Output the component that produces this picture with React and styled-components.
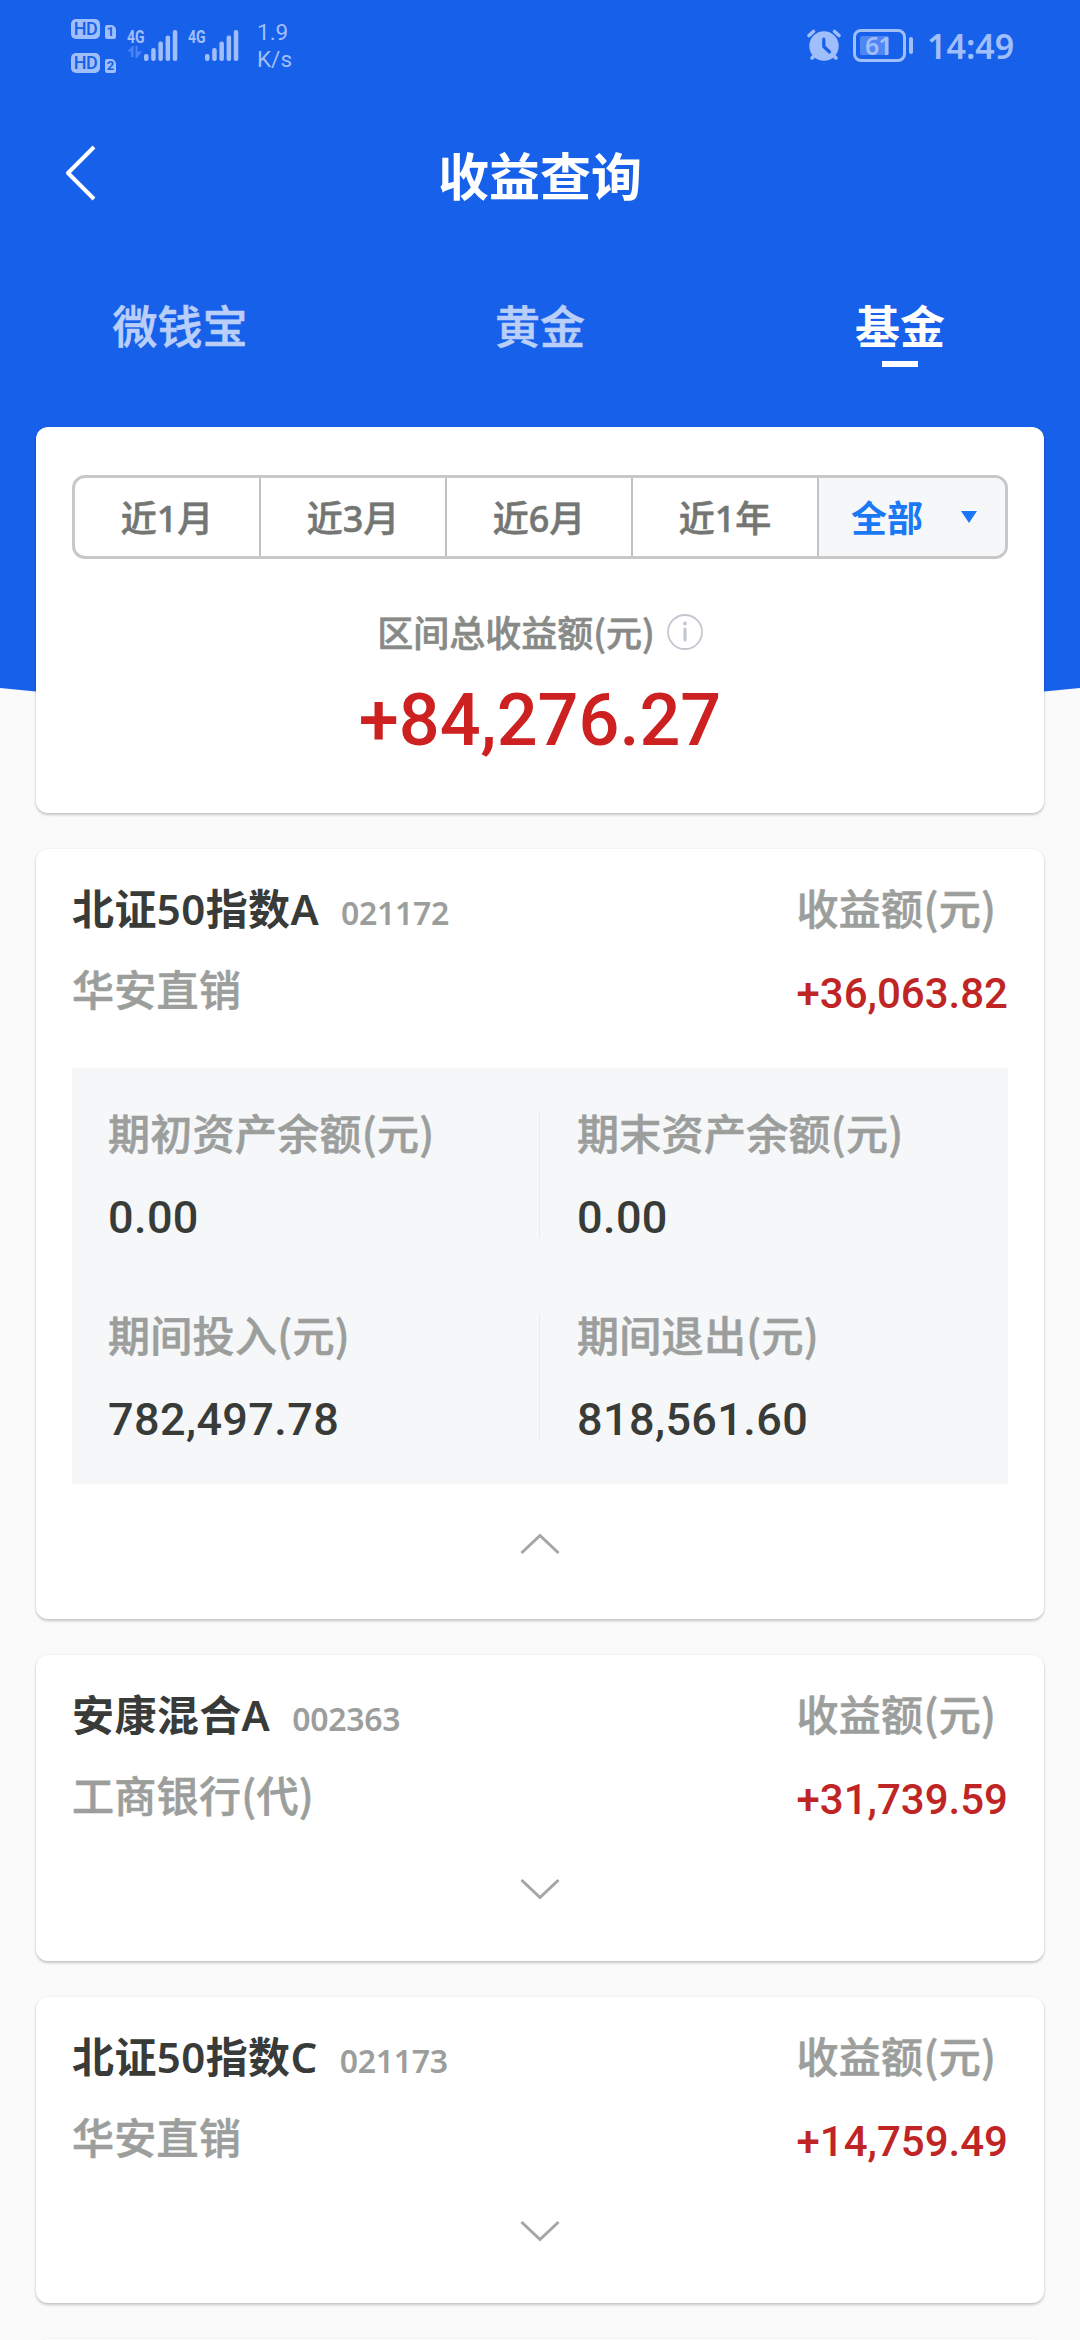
import React, { useState } from "react";
import styled, { createGlobalStyle, css } from "styled-components";

const SANS = '"Noto Sans", "Noto Sans CJK SC", sans-serif';
const CJK = '"Noto Sans CJK SC", "Noto Sans", sans-serif';
const NUM = 'Roboto, "Noto Sans CJK SC", sans-serif';
const STATUS = "#a0bef9";
const BLUE = "#1760ea";

const GlobalStyle = createGlobalStyle`
  * { box-sizing: border-box; }
  body {
    margin: 0;
    background: #fafafa;
    font-family: ${SANS};
    overflow: hidden;
  }
  button {
    font: inherit;
    color: inherit;
    border: 0;
    padding: 0;
    margin: 0;
    background: none;
  }
`;

/* Thickens regular CJK glyphs to a medium weight. */
const medium = css`
  font-weight: 500;
  -webkit-text-stroke: 0.6px currentColor;
`;

const Screen = styled.div`
  width: 1080px;
  height: 2340px;
  overflow: hidden;
  background: #fafafa;
`;

const Header = styled.header`
  height: 712px;
  margin-bottom: -285px;
  background: ${BLUE};
  clip-path: polygon(0 0, 100% 0, 100% 688px, 1044px 691.5px, 800px 707px, 540px 712px, 280px 707px, 36px 691.5px, 0 688px);
`;

const StatusBar = styled.div`
  display: flex;
  justify-content: space-between;
  height: 92px;
  padding: 0 66px 0 71px;
  color: ${STATUS};
`;

const StatusGroup = styled.div`
  display: flex;
  align-items: flex-start;
`;

const SimColumn = styled.div`
  display: flex;
  flex-direction: column;
  gap: 14px;
  padding-top: 18.5px;
  width: 56px;
`;

const SimLine = styled.div`
  display: flex;
  align-items: flex-end;
  gap: 5px;
  height: 20px;
`;

const HdBadge = styled.span`
  width: 29px;
  height: 20px;
  border-radius: 5px;
  background: ${STATUS};
  color: ${BLUE};
  font: 500 18px/20px ${NUM};
  letter-spacing: -0.5px;
  text-align: center;
`;

const SimTag = styled.span`
  width: 11px;
  height: 14px;
  border-radius: 2px 5px 2px 2px;
  background: ${STATUS};
  color: ${BLUE};
  font: 700 13px/14px ${NUM};
  text-align: center;
`;

const Signal = styled.div`
  display: flex;
  align-items: flex-end;
  height: 61px;
  width: 61px;
`;

const Network = styled.div`
  display: flex;
  flex-direction: column;
  width: 16.5px;
  height: 33px;
  white-space: nowrap;
`;

const NetworkLabel = styled.span`
  font: 700 19px/18px ${NUM};
  transform: scaleX(0.74);
  transform-origin: 0 50%;
`;

const Speed = styled.div`
  padding: 18.5px 0 0 8px;
  font: 400 22.5px/27.5px ${NUM};
`;

const AlarmSvg = styled.svg`
  margin: 28px 11px 0 0;
`;

const Battery = styled.div`
  width: 53px;
  height: 33px;
  margin-top: 29px;
  padding: 4px;
  border: 3px solid ${STATUS};
  border-radius: 8px;
  display: flex;
`;

const BatteryLevel = styled.div`
  width: 29px;
  height: 19px;
  border-radius: 2px;
  background: #4f86f3;
  display: flex;
  align-items: center;
`;

const BatteryText = styled.span`
  margin-left: 5px;
  font: 600 25px/19px ${SANS};
  letter-spacing: -1px;
`;

const BatteryTip = styled.div`
  width: 4px;
  height: 17px;
  margin: 37px 14px 0 3px;
  border-radius: 2px;
  background: ${STATUS};
`;

const Clock = styled.div`
  font: 600 34px/40px ${SANS};
  padding-top: 26px;
  width: 87px;
  white-space: nowrap;
`;

const NavBar = styled.div`
  display: grid;
  grid-template-columns: 160px 1fr 160px;
  align-items: center;
  height: 166px;
`;

const BackButton = styled.button`
  display: flex;
  padding: 0 0 4px 64px;
`;

const Title = styled.h1`
  margin: 0;
  color: #fff;
  font: 700 51px/60px ${SANS};
  text-align: center;
  padding-top: 2px;
`;

const Tabs = styled.nav`
  display: grid;
  grid-template-columns: repeat(3, 1fr);
  padding-top: 39px;
`;

const Tab = styled.button`
  display: flex;
  flex-direction: column;
  align-items: center;
  gap: 4px;
  font-size: 45px;
  line-height: 60px;
  ${medium}
  color: #b9cffa;

  ${({ $active }) =>
    $active &&
    css`
      font-weight: 700;
      -webkit-text-stroke: 0;
      color: #fff;
      &::after {
        content: "";
        width: 36px;
        height: 6px;
        background: #fff;
      }
    `}
`;

const Content = styled.main`
  position: relative;
  display: flex;
  flex-direction: column;
  gap: 36px;
  padding: 0 36px;
`;

const Card = styled.section`
  flex: none;
  display: flex;
  flex-direction: column;
  background: #fff;
  border-radius: 12px;
  padding: 0 36px;
  box-shadow: 0 2px 3px rgba(0, 0, 0, 0.2), 0 0 2px rgba(0, 0, 0, 0.08);
`;

const SummaryCard = styled(Card)`
  height: 386px;
  padding-top: 48px;
  align-items: center;
`;

const Segments = styled.div`
  display: grid;
  grid-template-columns: repeat(5, 1fr);
  width: 100%;
  height: 84px;
  border: 3px solid #c8c8c8;
  border-radius: 13px;
  overflow: hidden;
`;

const Segment = styled.button`
  display: flex;
  align-items: center;
  justify-content: center;
  gap: 38px;
  padding-top: 4px;
  font-size: 36px;
  line-height: 50px;
  ${medium}
  color: #747674;
  border-right: 2px solid #c2c2c2;

  &:last-child {
    border-right: 0;
  }

  ${({ $active }) =>
    $active &&
    css`
      padding-left: 4px;
      background: #f5f7f9;
      color: #1a78f5;
      font-weight: 700;
      -webkit-text-stroke: 0;
    `}
`;

const DropMark = styled.span`
  width: 16px;
  height: 12px;
  margin-bottom: 4px;
  background: #1a78f5;
  clip-path: polygon(0 0, 100% 0, 50% 100%);
`;

const SummaryLabel = styled.div`
  display: flex;
  align-items: center;
  gap: 12px;
  margin-top: 44px;
  font-family: ${CJK};
  font-size: 36px;
  line-height: 56px;
  ${medium}
  color: #888a88;
`;

const InfoSvg = styled.svg`
  margin-top: 1px;
`;

const Total = styled.div`
  margin-top: 17px;
  font: 500 72px/90px ${NUM};
  color: #cc2120;
`;

const FundCard = styled(Card)`
  height: ${({ $open }) => ($open ? 770 : 306)}px;
`;

const FundHead = styled.div`
  display: flex;
  justify-content: space-between;
  padding-top: 30px;
  height: 219px;
  flex: none;
`;

const FundColumn = styled.div`
  display: flex;
  flex-direction: column;
  gap: 21px;
`;

const FundTitle = styled.div`
  display: flex;
  align-items: baseline;
  gap: 22px;
  height: 60px;
`;

const FundName = styled.span`
  font-size: 42px;
  line-height: 60px;
  letter-spacing: 0.4px;
  font-weight: 600;
  color: #383b38;
`;

const FundCode = styled.span`
  font-size: 32px;
  line-height: 60px;
  font-weight: 600;
  letter-spacing: -0.3px;
  color: #9c9e9c;
`;

const Muted = styled.div`
  font-family: ${CJK};
  font-size: 42px;
  line-height: 56px;
  height: 60px;
  letter-spacing: 0.3px;
  ${medium}
  color: #9c9e9c;
`;

const Profit = styled.div`
  padding-top: 4px;
  font: 500 42px/60px ${NUM};
  color: #c02525;
`;

const Details = styled.div`
  display: grid;
  grid-template-columns: 1fr 1fr;
  row-gap: 76px;
  height: 416px;
  padding: 44px 0;
  background: #f5f7f9;
  flex: none;
`;

const Detail = styled.div`
  height: 126px;
  padding-left: ${({ $divider }) => ($divider ? 36 : 37)}px;
  border-right: ${({ $divider }) => ($divider ? "1px solid #e9ebed" : "0")};
`;

const DetailLabel = styled(Muted)`
  margin-top: -8px;
`;

const DetailValue = styled.div`
  margin-top: 24px;
  font: 500 45px/60px ${NUM};
  letter-spacing: 0.4px;
  color: #383b38;
`;

const Toggle = styled.button`
  display: flex;
  justify-content: center;
  padding-top: ${({ $open }) => ($open ? 48 : 3)}px;
`;

const Arrows = () => (
  <svg width="15" height="13" viewBox="0 0 15 13" fill="#4a83f2">
    <path d="M0 6 L5.500 0 H6.500 V11 H4 V5.500 H0 Z" />
    <path d="M8.500 0 H10.500 V5.500 H15 L10 12 H8.500 Z" />
  </svg>
);

const Bars = () => (
  <svg width="34" height="31" viewBox="0 0 34 31" fill={STATUS}>
    {[7, 13, 19.5, 25.5, 31].map((h, i) => (
      <rect key={h} x={i * 7.2} y={31 - h} width="4.500" height={h} rx="2" />
    ))}
  </svg>
);

const Alarm = () => (
  <AlarmSvg width="36" height="34" viewBox="0 0 36 34" fill="none" strokeLinecap="round">
    <circle cx="18" cy="18" r="14.700" fill={STATUS} />
    <path d="M3 7.500 L7.500 3.500 M33 7.500 L28.500 3.500" stroke={STATUS} strokeWidth="3.600" />
    <path d="M8 28 L6 30 M28 28 L30 30" stroke={STATUS} strokeWidth="3.600" />
    <path d="M17.800 11 V18.500 L23.500 24" stroke={BLUE} strokeWidth="3.200" strokeLinejoin="round" />
  </AlarmSvg>
);

const Chevron = ({ up }) => (
  <svg width="40" height="24" viewBox="0 0 40 24" fill="none" stroke="#a5a5a5" strokeWidth="3">
    <path d={up ? "M1.500 21 L20 3.500 L38.500 21" : "M1.500 3 L20 20.500 L38.500 3"} />
  </svg>
);

const FUNDS = [
  {
    name: "北证50指数A",
    code: "021172",
    channel: "华安直销",
    profit: "+36,063.82",
    details: [
      ["期初资产余额(元)", "0.00"],
      ["期末资产余额(元)", "0.00"],
      ["期间投入(元)", "782,497.78"],
      ["期间退出(元)", "818,561.60"],
    ],
  },
  { name: "安康混合A", code: "002363", channel: "工商银行(代)", profit: "+31,739.59" },
  { name: "北证50指数C", code: "021173", channel: "华安直销", profit: "+14,759.49" },
];

function Fund({ fund }) {
  const [open, setOpen] = useState(Boolean(fund.details));
  const expanded = open && fund.details;
  return (
    <FundCard $open={expanded}>
      <FundHead>
        <FundColumn>
          <FundTitle>
            <FundName>{fund.name}</FundName>
            <FundCode>{fund.code}</FundCode>
          </FundTitle>
          <Muted>{fund.channel}</Muted>
        </FundColumn>
        <FundColumn>
          <Muted>收益额(元)</Muted>
          <Profit>{fund.profit}</Profit>
        </FundColumn>
      </FundHead>
      {expanded && (
        <Details>
          {fund.details.map(([label, value], i) => (
            <Detail key={label} $divider={i % 2 === 0}>
              <DetailLabel>{label}</DetailLabel>
              <DetailValue>{value}</DetailValue>
            </Detail>
          ))}
        </Details>
      )}
      <Toggle $open={expanded} onClick={() => setOpen(!open)}>
        <Chevron up={expanded} />
      </Toggle>
    </FundCard>
  );
}

export default function App() {
  return (
    <Screen>
      <GlobalStyle />
      <Header>
        <StatusBar>
          <StatusGroup>
            <SimColumn>
              {["1", "2"].map((n) => (
                <SimLine key={n}>
                  <HdBadge>HD</HdBadge>
                  <SimTag>{n}</SimTag>
                </SimLine>
              ))}
            </SimColumn>
            <Signal>
              <Network>
                <NetworkLabel>4G</NetworkLabel>
                <Arrows />
              </Network>
              <Bars />
            </Signal>
            <Signal>
              <Network>
                <NetworkLabel>4G</NetworkLabel>
              </Network>
              <Bars />
            </Signal>
            <Speed>
              1.9
              <br />
              K/s
            </Speed>
          </StatusGroup>
          <StatusGroup>
            <Alarm />
            <Battery>
              <BatteryLevel>
                <BatteryText>61</BatteryText>
              </BatteryLevel>
            </Battery>
            <BatteryTip />
            <Clock>14:49</Clock>
          </StatusGroup>
        </StatusBar>
        <NavBar>
          <BackButton>
            <svg width="32" height="56" viewBox="0 0 32 56" fill="none" stroke="#fff" strokeWidth="4">
              <path d="M30 2 L4 28 L30 54" strokeLinejoin="round" />
            </svg>
          </BackButton>
          <Title>收益查询</Title>
        </NavBar>
        <Tabs>
          <Tab>微钱宝</Tab>
          <Tab>黄金</Tab>
          <Tab $active>基金</Tab>
        </Tabs>
      </Header>
      <Content>
        <SummaryCard>
          <Segments>
            <Segment>近1月</Segment>
            <Segment>近3月</Segment>
            <Segment>近6月</Segment>
            <Segment>近1年</Segment>
            <Segment $active>
              全部
              <DropMark />
            </Segment>
          </Segments>
          <SummaryLabel>
            区间总收益额(元)
            <InfoSvg width="36" height="36" viewBox="0 0 36 36" fill="none" stroke="#c3c8d0">
              <circle cx="18" cy="18" r="17" strokeWidth="1.800" />
              <path d="M18 15 V26" strokeWidth="3.200" strokeLinecap="round" />
              <circle cx="18" cy="9.500" r="1.900" fill="#c3c8d0" stroke="none" />
            </InfoSvg>
          </SummaryLabel>
          <Total>+84,276.27</Total>
        </SummaryCard>
        {FUNDS.map((f) => (
          <Fund key={f.code} fund={f} />
        ))}
        <FundCard />
      </Content>
    </Screen>
  );
}
